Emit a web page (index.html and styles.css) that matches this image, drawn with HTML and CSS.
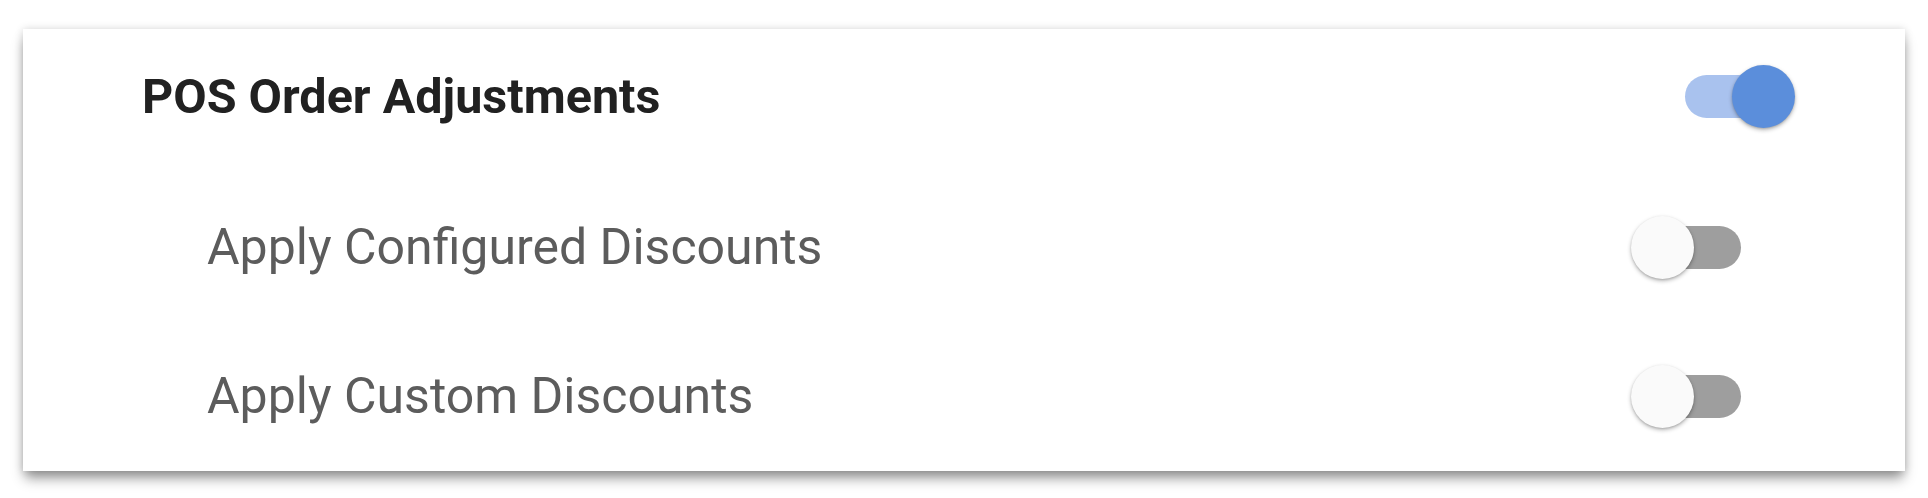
FILE: index.html
```html
<!DOCTYPE html>
<html lang="en">
<head>
  <meta charset="UTF-8">
  <meta name="viewport" content="width=device-width, initial-scale=1.0">
  <title>POS Order Adjustments</title>
  <link rel="stylesheet" href="styles.css">
</head>
<body>
  <div class="card">
    <div class="row row-title">
      <span class="title">POS Order Adjustments</span>
      <label class="toggle">
        <input type="checkbox" checked />
        <span class="track"></span>
        <span class="knob"></span>
      </label>
    </div>

    <div class="sub-list">
      <div class="row row-sub">
        <span class="label">Apply Configured Discounts</span>
        <label class="toggle">
          <input type="checkbox" />
          <span class="track"></span>
          <span class="knob"></span>
        </label>
      </div>

      <div class="row row-sub">
        <span class="label">Apply Custom Discounts</span>
        <label class="toggle">
          <input type="checkbox" />
          <span class="track"></span>
          <span class="knob"></span>
        </label>
      </div>
    </div>
  </div>
</body>
</html>
```

FILE: styles.css
```css
html,
body {
  height: 100%;
}

body {
  margin: 0;
  padding: 29px 23px 0;
  box-sizing: border-box;
  background: #fff;
  font-family: Roboto, 'Noto Sans', Arial, sans-serif;
}

.card {
  background: #fff;
  box-shadow: 0 9px 12px -2px rgba(0, 0, 0, 0.42), 0 0 8px rgba(0, 0, 0, 0.15);
}

.row {
  display: flex;
  align-items: center;
  justify-content: space-between;
}

.row-title {
  height: 134px;
  padding: 0 110px 0 119px;
}

.title {
  font-size: 48.5px;
  font-weight: 700;
  color: #212121;
}

.sub-list {
  padding-top: 8px;
}

.row-sub {
  height: 150px;
  padding: 0 159px 0 184px;
}

.row-sub:first-child {
  height: 152px;
}

.row-sub:last-child {
  height: 146px;
  padding-bottom: 2px;
}

.label {
  font-size: 50px;
  font-weight: 400;
  color: #5c5c5c;
}

.toggle {
  position: relative;
  display: block;
  width: 115px;
  height: 63px;
  cursor: pointer;
}

.toggle input {
  display: none;
}

.track {
  position: absolute;
  left: 5px;
  right: 5px;
  top: 10px;
  height: 43px;
  border-radius: 22px;
  background: #9e9e9e;
}

.knob {
  position: absolute;
  left: 0;
  top: 0;
  width: 63px;
  height: 63px;
  border-radius: 50%;
  background: #fafafa;
  box-shadow: 0 2px 4px rgba(0, 0, 0, 0.28), 0 1px 2px rgba(0, 0, 0, 0.12);
  transition: left 0.2s ease;
}

.toggle input:checked ~ .track {
  background: #a9c2ee;
}

.toggle input:checked ~ .knob {
  left: 52px;
  background: #5b8edb;
}
```
